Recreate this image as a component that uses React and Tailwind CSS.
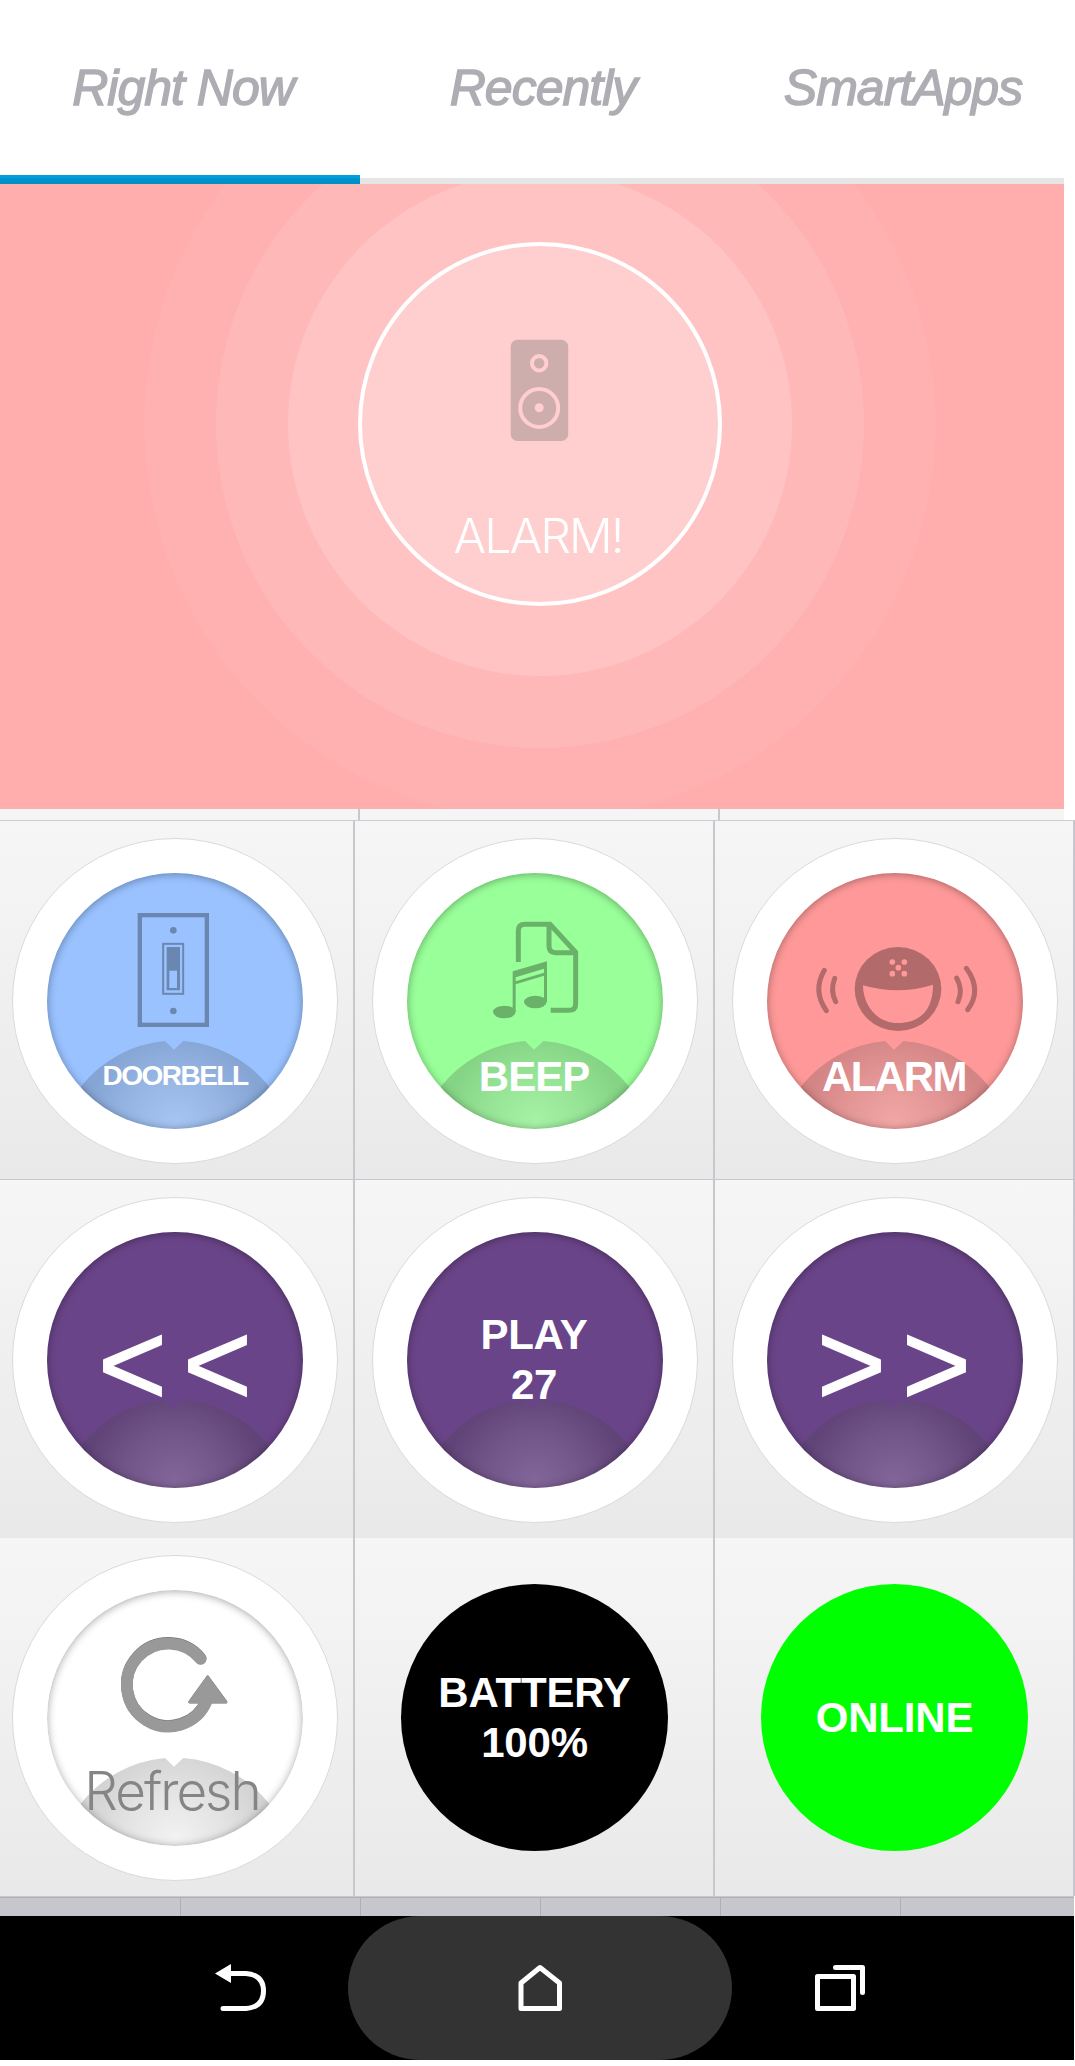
function SwitchIcon() {
  return (
    <svg viewBox="141 249 768 768" className="absolute inset-0 size-full">
      <g opacity="0.3">
        <rect x="419.500" y="375.500" width="201" height="329" fill="none" stroke="#000" strokeWidth="13" />
        <rect x="489.500" y="461.500" width="60" height="150" fill="none" stroke="#000" strokeWidth="6" />
        <path d="M500 471h40v130h-40z M508 542v52h23v-52z" fillRule="evenodd" />
        <circle cx="520" cy="421" r="10" />
        <circle cx="520" cy="663" r="10" />
      </g>
    </svg>
  );
}

function MusicIcon() {
  return (
    <svg viewBox="171 249 768 768" className="absolute inset-0 size-full">
      <g opacity="0.3">
        <path
          d="M505 516V423Q505 403 525 403H600L677 487V641Q677 661 657 661H602 M597 405V468Q597 488 617 488H677"
          fill="none"
          stroke="#000"
          strokeWidth="15"
        />
        <path d="M488 544L591 514V636H582V557L497 583V666H488Z M497 562V574L582 548V536Z" fillRule="evenodd" />
        <ellipse cx="463" cy="666" rx="34" ry="19" />
        <ellipse cx="556" cy="636" rx="34" ry="19" />
      </g>
    </svg>
  );
}

function SirenIcon() {
  return (
    <svg viewBox="186 249 768 768" className="absolute inset-0 size-full">
      <defs>
        <mask id="grille">
          <rect x="186" y="249" width="768" height="768" fill="#fff" />
          {[[562, 516], [598, 516], [580, 533], [562, 551], [598, 551]].map(([x, y]) => (
            <circle key={`${x}-${y}`} cx={x} cy={y} r="8.500" fill="#000" />
          ))}
          <path d="M474 586Q580 617 684 584C684 655 650 699 578 699C510 699 474 640 474 586Z" fill="#000" />
        </mask>
      </defs>
      <g opacity="0.3">
        <ellipse cx="579" cy="597" rx="130" ry="126" mask="url(#grille)" />
        <g fill="none" stroke="#000" strokeLinecap="round" strokeWidth="15">
          <path d="M358 541Q322 602 364 662" />
          <path d="M389 565Q375 602 392 635" />
          <path d="M755 564Q775 600 759 635" />
          <path d="M784 535Q832 600 788 659" />
        </g>
      </g>
    </svg>
  );
}

function RefreshIcon() {
  return (
    <svg viewBox="141 181 768 768" className="absolute inset-0 size-full">
      <g transform="translate(0 -2)" fill="#777" stroke="#777">
        <path d="M602 388A124.500 124.500 0 1 0 620 514" fill="none" strokeWidth="35" strokeLinecap="round" />
        <path d="M623 443L678 518H569Z" strokeWidth="8" strokeLinejoin="round" />
      </g>
      <g fill="#999" stroke="#999">
        <path d="M602 388A124.500 124.500 0 1 0 620 514" fill="none" strokeWidth="35" strokeLinecap="round" />
        <path d="M623 443L678 518H569Z" strokeWidth="8" strokeLinejoin="round" />
      </g>
    </svg>
  );
}

function Fan() {
  return (
    <svg viewBox="-384 -384 768 768" className="absolute inset-0 size-full">
      <defs>
        <radialGradient id="fan" gradientUnits="userSpaceOnUse" cx="0" cy="370" r="300">
          <stop offset="0" stopColor="#cfcfcf" stopOpacity="0.25" />
          <stop offset="0.5" stopColor="#8c8c8c" stopOpacity="0.24" />
          <stop offset="0.9" stopColor="#424242" stopOpacity="0.23" />
        </radialGradient>
      </defs>
      <path
        d="M-281 255A363 363 0 0 1 -30 120L-3 146L25 120A363 363 0 0 1 281 255L330 400H-330Z"
        fill="url(#fan)"
      />
    </svg>
  );
}

function Tile({ children, line }) {
  return (
    <div
      className={`flex items-center justify-center border-r-2 border-[#c8c7ce] bg-linear-to-b from-[#f6f6f6] to-[#e9e9e9] pl-[2px] ${
        line ? 'h-[359px] pt-px shadow-[inset_0_-1px_0_#c7c7ca]' : 'h-[358px] pt-[2px]'
      }`}
    >
      {children}
    </div>
  );
}

function RoundButton({ color, icon, children }) {
  return (
    <div className="flex size-[326px] items-center justify-center rounded-full border-[1.5px] border-[#dadada] bg-white">
      <div className={`relative size-[256px] overflow-hidden rounded-full ${color}`}>
        <Fan />
        <div className="absolute inset-0 rounded-full shadow-[inset_0_1px_9px_rgba(0,0,0,0.36)]" />
        {icon}
        {children}
      </div>
    </div>
  );
}

function Label({ className, children }) {
  return (
    <div className={`absolute -inset-x-4 text-center font-bold whitespace-nowrap text-white ${className}`}>{children}</div>
  );
}

function StatusDisc({ color, children }) {
  return (
    <div
      className={`mr-px mb-px flex size-[267px] items-center justify-center rounded-full text-center text-[42px] leading-[50px] font-bold tracking-[-0.200px] text-white ${color}`}
    >
      {children}
    </div>
  );
}

function Hero() {
  return (
    <section className="relative h-[625px] w-[1064px] overflow-hidden bg-[#ffadad]">
      <svg viewBox="0 184 1064 625" className="absolute inset-0 size-full">
        <circle cx="540" cy="424" r="396" fill="#ffb0b0" />
        <circle cx="540" cy="424" r="324" fill="#ffb8b8" />
        <circle cx="540" cy="424" r="252" fill="#ffc3c3" />
        <circle cx="540" cy="424" r="180" fill="#ffcece" stroke="#fff" strokeWidth="4" />
        <rect x="510.700" y="339.700" width="57.500" height="101.300" rx="7" fill="#ceadad" />
        <g fill="none" stroke="#ffcece" strokeWidth="4">
          <circle cx="539.200" cy="363.300" r="7.200" />
          <circle cx="539.200" cy="408" r="19" />
        </g>
        <circle cx="539.200" cy="407.700" r="4.500" fill="#ffcece" />
      </svg>
      <div className="absolute top-[321.500px] left-[388px] w-[300px] text-center font-['Inter'] text-[48.500px] leading-[60px] font-light tracking-[-2px] text-white">
        ALARM!
      </div>
    </section>
  );
}

function Tabs() {
  return (
    <header>
      <nav className="grid h-[175px] grid-cols-[360px_360px_360px] text-[50px] text-[#adadb3] italic">
        {['Right Now', 'Recently', 'SmartApps'].map((name) => (
          <button
            key={name}
            className="pt-[2px] pl-[6px] tracking-[-1px] whitespace-nowrap [-webkit-text-stroke:1.400px_#adadb3]"
          >
            {name}
          </button>
        ))}
      </nav>
      <div className="flex h-[9px] w-[1064px] items-end">
        <div className="h-[9px] w-[360px] border-t-[3px] border-[#00a0df] bg-[#0091c8]" />
        <div className="h-[6px] flex-1 bg-[#e5e5e5]" />
      </div>
    </header>
  );
}

function NavBar() {
  return (
    <footer className="grid h-[144px] w-[1074px] grid-cols-[348px_384px_342px] bg-black">
      <button className="flex pt-[48px] pl-[215px]">
        <svg width="52" height="48" viewBox="215 1964 52 48">
          <path d="M215 1973.500L231 1964V1983Z" fill="#fff" />
          <path d="M230 1973.500H246Q263.500 1975 263.500 1991Q263.500 2007 246 2008.500H223" fill="none" stroke="#fff" strokeWidth="5" strokeLinecap="round" />
        </svg>
      </button>
      <button className="flex rounded-[72px] bg-[#333] pt-[48px] pl-[170px]">
        <svg width="46" height="48" viewBox="518 1964 46 48">
          <path d="M521 2008.500V1983L540 1967.500L559.500 1983V2008.500Z" fill="none" stroke="#fff" strokeWidth="5" strokeLinejoin="round" />
        </svg>
      </button>
      <button className="flex pt-[48px] pl-[83px]">
        <svg width="52" height="48" viewBox="815 1964 52 48">
          <g fill="none" stroke="#fff" strokeWidth="5" strokeLinecap="round" strokeLinejoin="round">
            <rect x="817.500" y="1976.500" width="36" height="32" />
            <path d="M835.500 1967.500H862.500V1992.500" />
          </g>
        </svg>
      </button>
    </footer>
  );
}

export default function App() {
  return (
    <div className="h-[2066px] w-[1075px] overflow-hidden bg-white font-['Liberation_Sans',Arial,sans-serif]">
      <Tabs />
      <Hero />
      <div className="grid h-[11px] w-[1064px] grid-cols-[360px_360px_344px] bg-[#f5f5f5]">
        <div className="border-r-2 border-[#c8c7ce]" />
        <div className="border-r-2 border-[#c8c7ce]" />
      </div>
      <div className="h-px bg-[#cdcdd1]" />
      <main className="-ml-[5px] grid w-[1080px] grid-cols-3">
        <Tile line>
          <RoundButton color="bg-[#99c2ff]" icon={<SwitchIcon />}>
            <Label className="top-[185px] text-[28px] leading-[36px] tracking-[-1.500px]">DOORBELL</Label>
          </RoundButton>
        </Tile>
        <Tile line>
          <RoundButton color="bg-[#99ff99]" icon={<MusicIcon />}>
            <Label className="top-[179px] pr-[2px] text-[42px] leading-[50px] tracking-[-1px]">BEEP</Label>
          </RoundButton>
        </Tile>
        <Tile line>
          <RoundButton color="bg-[#ff9999]" icon={<SirenIcon />}>
            <Label className="top-[179px] pr-[2px] text-[42px] leading-[50px] tracking-[-1.500px]">ALARM</Label>
          </RoundButton>
        </Tile>
        <Tile>
          <RoundButton color="bg-[#6a4488]">
            <Label className="top-[62px] pl-[16px] text-[118px] leading-[140px] font-normal! tracking-[16px] [-webkit-text-stroke:1.500px_#fff]">
              {'<<'}
            </Label>
          </RoundButton>
        </Tile>
        <Tile>
          <RoundButton color="bg-[#6a4488]">
            <Label className="top-[78px] pr-[2px] text-[42px] leading-[50px] tracking-[-0.300px]">
              PLAY
              <br />
              27
            </Label>
          </RoundButton>
        </Tile>
        <Tile>
          <RoundButton color="bg-[#6a4488]">
            <Label className="top-[62px] pl-[14px] text-[118px] leading-[140px] font-normal! tracking-[16px] [-webkit-text-stroke:1.500px_#fff]">
              {'>>'}
            </Label>
          </RoundButton>
        </Tile>
        <Tile>
          <RoundButton color="bg-white" icon={<RefreshIcon />}>
            <Label className="top-[169px] pr-[6px] font-['Inter'] text-[53px] leading-[64px] font-light! tracking-[-2px] text-[#858585]!">
              Refresh
            </Label>
          </RoundButton>
        </Tile>
        <Tile>
          <StatusDisc color="bg-black">
            BATTERY
            <br />
            100%
          </StatusDisc>
        </Tile>
        <Tile>
          <StatusDisc color="bg-[#00ff00]">ONLINE</StatusDisc>
        </Tile>
      </main>
      <div className="grid h-[20px] w-[1074px] grid-cols-[181px_180px_180px_180px_180px_173px] border-t border-[#c8c7ce] bg-[#c6c7cc]">
        {[0, 1, 2, 3, 4, 5].map((n) => (
          <div key={n} className="border-t border-r border-[#afafb5] last:border-r-0" />
        ))}
      </div>
      <NavBar />
    </div>
  );
}
